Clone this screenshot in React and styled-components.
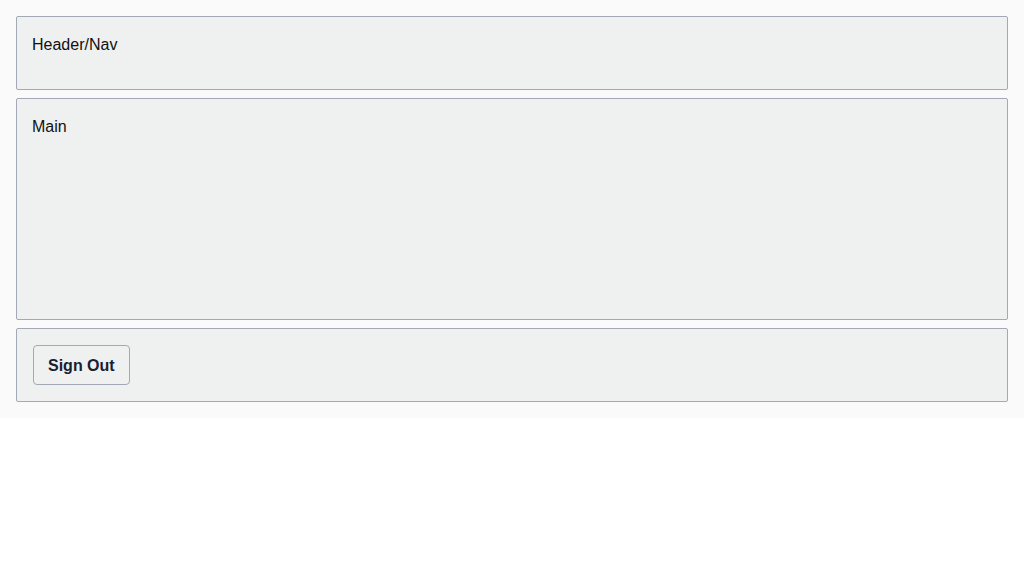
import React from "react";
import styled, { createGlobalStyle } from "styled-components";

const GlobalStyle = createGlobalStyle`
  body {
    margin: 0;
    background: #ffffff;
    font-family: "Liberation Sans", Arial, sans-serif;
    color: #111111;
  }
`;

const Layout = styled.div`
  display: flex;
  flex-direction: column;
  gap: 8px;
  padding: 16px;
  background: #fafafa;
`;

const Panel = styled.section`
  box-sizing: border-box;
  min-height: ${(p) => p.$height}px;
  padding: 16px 15px;
  background: #eff0f0;
  border: 1px solid #a3a8b6;
  border-radius: 2px;
  font-size: 16px;
  line-height: 24px;
`;

const Button = styled.button`
  height: 40px;
  margin-left: 1px;
  padding: 1px 14px 0;
  background: #eff0f0;
  border: 1px solid #a3a8b6;
  border-radius: 4px;
  font-family: "Liberation Sans", Arial, sans-serif;
  font-size: 16px;
  font-weight: 700;
  color: #1a2030;
  cursor: pointer;
`;

export default function App() {
  return (
    <>
      <GlobalStyle />
      <Layout>
        <Panel $height={74}>Header/Nav</Panel>
        <Panel $height={222}>Main</Panel>
        <Panel $height={74}>
          <Button>Sign Out</Button>
        </Panel>
      </Layout>
    </>
  );
}
